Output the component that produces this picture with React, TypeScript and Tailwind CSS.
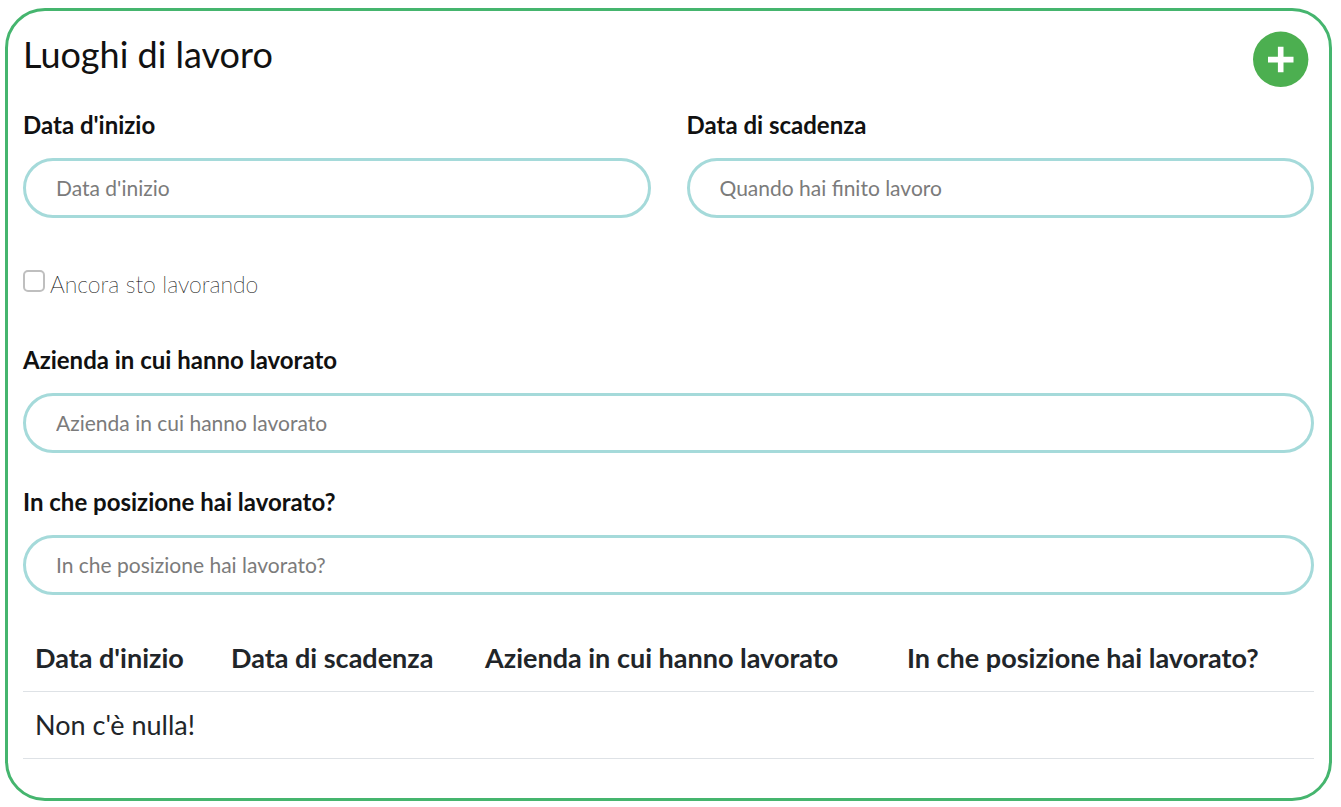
import { type ReactNode } from "react";

function Field({ id, label, placeholder }: { id: string; label: string; placeholder?: string }) {
  return (
    <div className="flex flex-col gap-[15px]">
      <label htmlFor={id} className="text-2xl leading-[37px] font-bold text-[#111111]">
        {label}
      </label>
      <input
        id={id}
        type="text"
        placeholder={placeholder ?? label}
        className="h-15 w-full rounded-full border-3 border-[#a5dada] bg-white px-[30px] pb-0.5 text-[21px] text-[#212529] outline-none placeholder:text-[#7b7b7b]"
      />
    </div>
  );
}

function Head({ children, className }: { children: ReactNode; className: string }) {
  return <th scope="col" className={`p-3 text-left font-bold ${className}`}>{children}</th>;
}

export default function App() {
  return (
    <main className="bg-white pt-2 pr-[9px] pb-[6px] pl-[5px] font-['Lato',sans-serif] antialiased">
      <section className="rounded-[40px] border-3 border-[#45b56e] px-[15px] pt-5 pb-[39px]">
        <header className="flex h-[59px] items-start justify-between pr-[5px]">
          <h1 className="text-4xl leading-[46px] text-[#111111]">Luoghi di lavoro</h1>
          <button type="button" aria-label="Aggiungi" className="size-14">
            <svg viewBox="0 0 56 56" className="size-full" aria-hidden="true">
              <circle cx="27.7" cy="28.3" r="27.7" fill="#4caf50" />
              <path d="M27.7 15.8V41.3M15 28.6H40.5" stroke="#fff" strokeWidth="5.6" />
            </svg>
          </button>
        </header>
        <form className="mt-4">
          <div className="grid grid-cols-2 gap-9">
            <Field id="start" label="Data d'inizio" />
            <Field id="end" label="Data di scadenza" placeholder="Quando hai finito lavoro" />
          </div>
          <div className="mt-12 mb-[39px] flex items-start gap-[5px]">
            <input id="working" type="checkbox" className="mt-1 size-[22px] appearance-none rounded-[5px] border-2 border-[#bfbfbf] bg-white" />
            <label htmlFor="working" className="font-['Lato_Thin','Lato',sans-serif] text-[23px] leading-9 font-normal text-black">Ancora sto lavorando</label>
          </div>
          <div className="flex flex-col gap-[30px]">
            <Field id="company" label="Azienda in cui hanno lavorato" />
            <Field id="position" label="In che posizione hai lavorato?" />
          </div>
        </form>
        <table className="mt-[30px] w-full border-collapse text-[27px] leading-[42px] text-[#212529]">
          <thead>
            <tr className="border-b border-[#dee2e6]">
              <Head className="w-[196px]">Data d'inizio</Head>
              <Head className="w-[254px]">Data di scadenza</Head>
              <Head className="w-[422px]">Azienda in cui hanno lavorato</Head>
              <Head className="">In che posizione hai lavorato?</Head>
            </tr>
          </thead>
          <tbody>
            <tr className="border-b border-[#dee2e6]">
              <td colSpan={4} className="p-3">Non c'è nulla!</td>
            </tr>
          </tbody>
        </table>
      </section>
    </main>
  );
}
